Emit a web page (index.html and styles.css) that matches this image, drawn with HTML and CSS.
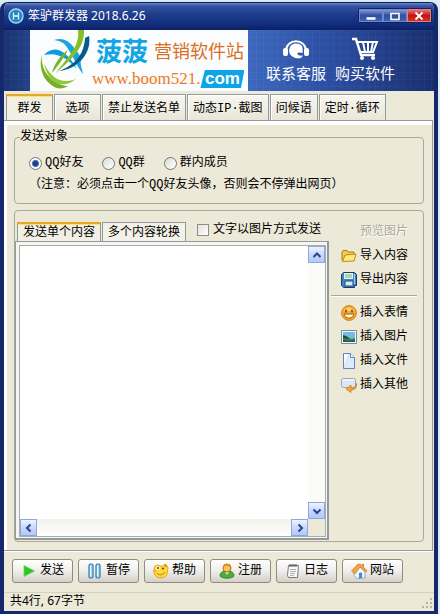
FILE: index.html
```html
<!DOCTYPE html>
<html lang="zh-CN">
<head>
    <meta charset="UTF-8">
    <meta name="viewport" content="width=device-width, initial-scale=1.0">
    <title>笨驴群发器 2018.6.26</title>
    <link rel="stylesheet" href="styles.css">
</head>
<body>
    <div class="window">
        <header class="titlebar">
            <svg class="app-icon" viewBox="0 0 16 16">
                <circle cx="8" cy="8" r="7" fill="#2a86c4" stroke="#a4dcf4" stroke-width="1.4"/>
                <path d="M5.5 4.5v7M10.5 4.5v7M5.5 8h5" stroke="#e2f6ff" stroke-width="1.3" fill="none"/>
            </svg>
            <h1>笨驴群发器 2018.6.26</h1>
            <div class="window-controls">
                <button type="button" aria-label="最小化"><svg viewBox="0 0 12 10"><path d="M1.500 7.500h9" stroke="#fff" stroke-width="2.500"/></svg></button>
                <button type="button" aria-label="最大化"><svg viewBox="0 0 12 10"><path d="M2 2.500h8v6H2z" fill="none" stroke="#fff" stroke-width="1.600"/></svg></button>
                <button type="button" class="close" aria-label="关闭"><svg viewBox="0 0 12 10"><path d="M2.500 1.500l7 7M9.500 1.500l-7 7" stroke="#fff" stroke-width="1.800"/></svg></button>
            </div>
        </header>

        <div class="banner">
            <div class="brand">
                <svg class="brand-mark" viewBox="0 0 58 60">
                    <path d="M12 25C20 16 32 16 45 39C34 27 25 22 12 25z" fill="#0d9bdc"/>
                    <path d="M22 10C37 5 43 20 50 28C47 33 50 38 51 44C44 35 41 26 36 19C33 13 29 11 22 10z" fill="#1ba5e0"/>
                    <path d="M57 6C60 22 47 39 27 41C45 34 52 23 53 8z" fill="#075b88"/>
                    <path d="M10 25C8 40 20 55 36 56C31 59 25 60 18 54C9 47 7 34 10 25z" fill="#78ae28"/>
                    <path d="M12 34C21 50 30 54 44 49C31 60 16 53 12 34z" fill="#8fc93a"/>
                    <path d="M46 0h6C53 19 37 31 24 43C35 27 48 18 46 0z" fill="#86bf25"/>
                    <path d="M36 20C29 25 22 33 20 43C28 33 33 26 36 20z" fill="#78b52a"/>
                </svg>
                <div class="brand-text">
                    <div class="brand-name"><strong>菠菠</strong><span>营销软件站</span></div>
                    <div class="brand-url"><span>www.boom521.</span><b>com</b></div>
                </div>
            </div>
            <nav class="banner-links">
                <a href="#">
                    <svg viewBox="0 0 28 24">
                        <path d="M4 14C4 1 24 1 24 14" fill="none" stroke="#fff" stroke-width="2"/>
                        <rect x="1" y="11" width="5" height="8" rx="2" fill="#fff"/>
                        <rect x="22" y="11" width="5" height="8" rx="2" fill="#fff"/>
                        <path d="M14 6.500C8 6.500 6.500 12 7.500 16C9 20 14 22 19 21L21 18.500C15 19.500 14 15 17 15.500L20.500 16C21.500 10 20 6.500 14 6.500z" fill="#fff"/>
                    </svg>
                    <span>联系客服</span>
                </a>
                <a href="#">
                    <svg viewBox="0 0 28 24">
                        <path d="M1 2h4l5 16h14" fill="none" stroke="#fff" stroke-width="2.500"/>
                        <path d="M7 5h19l-4 10H10M12 5l2 10M17 5v10M22 5l-2 10" fill="none" stroke="#fff" stroke-width="2"/>
                        <circle cx="11" cy="21" r="2" fill="#fff"/><circle cx="22" cy="21" r="2" fill="#fff"/>
                    </svg>
                    <span>购买软件</span>
                </a>
            </nav>
        </div>

        <nav class="tabs">
            <button type="button" class="tab active">群发</button>
            <button type="button" class="tab">选项</button>
            <button type="button" class="tab">禁止发送名单</button>
            <button type="button" class="tab">动态IP·截图</button>
            <button type="button" class="tab">问候语</button>
            <button type="button" class="tab">定时·循环</button>
        </nav>

        <main class="panel">
            <fieldset class="group target">
                <legend>发送对象</legend>
                <div class="radios">
                    <label><input type="radio" name="target" checked>QQ好友</label>
                    <label><input type="radio" name="target">QQ群</label>
                    <label><input type="radio" name="target">群内成员</label>
                </div>
                <p class="note">（注意：必须点击一个QQ好友头像，否则会不停弹出网页）</p>
            </fieldset>

            <section class="group content">
                <div class="editor">
                    <div class="editor-head">
                        <button type="button" class="subtab active">发送单个内容</button>
                        <button type="button" class="subtab">多个内容轮换</button>
                        <label class="as-image"><input type="checkbox">文字以图片方式发送</label>
                    </div>
                    <div class="editor-page">
                        <div class="editor-box">
                            <textarea aria-label="发送内容"></textarea>
                            <div class="scroll-y">
                                <button type="button" aria-label="向上"><svg viewBox="0 0 10 10"><path d="M1.500 7L5 3.500L8.500 7"/></svg></button>
                                <button type="button" aria-label="向下"><svg viewBox="0 0 10 10"><path d="M1.500 3.500L5 7L8.500 3.500"/></svg></button>
                            </div>
                            <div class="scroll-x">
                                <button type="button" aria-label="向左"><svg viewBox="0 0 10 10"><path d="M6.500 1.500L3 5L6.500 8.500"/></svg></button>
                                <button type="button" aria-label="向右"><svg viewBox="0 0 10 10"><path d="M3.500 1.500L7 5L3.500 8.500"/></svg></button>
                            </div>
                            <div class="scroll-corner"></div>
                        </div>
                    </div>
                </div>

                <aside class="actions">
                    <button type="button" class="action preview" disabled>预览图片</button>
                    <button type="button" class="action">
                        <svg viewBox="0 0 16 16"><path d="M1 12.500V4l1-1.500h4l1 1.500h6v3" fill="#f0cf55" stroke="#a87a12"/><path d="M1.500 13.500L4 7l11-1-2 7z" fill="#ffe680" stroke="#b98a18"/></svg>
                        导入内容
                    </button>
                    <button type="button" class="action">
                        <svg viewBox="0 0 16 16"><path d="M2.500.500h11l2 2v11h-2v2h-11l-2-2v-11z" fill="#3f83c8" stroke="#153d6b"/><path d="M3 1h9v6H3z" fill="#e6f4df"/><path d="M4 3h7M4 5h7" stroke="#77b18c"/><path d="M4 9h8v5H4z" fill="#dbe9f6" stroke="#234f80"/><path d="M13.500 2v10" stroke="#9bd3ee"/></svg>
                        导出内容
                    </button>
                    <hr>
                    <button type="button" class="action">
                        <svg viewBox="0 0 16 16"><circle cx="8" cy="8" r="7.400" fill="#f7a934" stroke="#d87d12"/><path d="M2.500 6C4 1.500 12 1.500 13.500 6z" fill="#ffd37c"/><path d="M5 4.500v3M11 4.500v3" stroke="#7b4208" stroke-width="1.500"/><path d="M3 9h10C12 14.500 4 14.500 3 9z" fill="#fff3cd" stroke="#a75a0b"/></svg>
                        插入表情
                    </button>
                    <button type="button" class="action">
                        <svg viewBox="0 0 16 16"><path d="M.500 1.500h15v13H.500z" fill="#f4fafa" stroke="#6d9393"/><path d="M2 3h12v10H2z" fill="#76b9e8"/><path d="M2 7l5 1 3 2 4-1v4H2z" fill="#447f38"/><path d="M2 6l3 1 4 3-7-1z" fill="#1e4d32"/><path d="M2 11l6 1 6-1v2H2z" fill="#244e75"/></svg>
                        插入图片
                    </button>
                    <button type="button" class="action">
                        <svg viewBox="0 0 16 16"><path d="M2.500.500h7l4 4v11h-11z" fill="#dcebfc" stroke="#6484b4"/><path d="M3 1h4L3 11z" fill="#fff"/><path d="M9.500.500v4h4" fill="#fff" stroke="#6484b4"/></svg>
                        插入文件
                    </button>
                    <button type="button" class="action">
                        <svg viewBox="0 0 16 16"><rect x=".5" y="1.500" width="14" height="9" rx="2" fill="#dce7f3" stroke="#96a7bb"/><path d="M2 3h11" stroke="#fff"/><path d="M15.500 6.500C15 10 13 11 10 11v-3l-5 4 5 3.500V13c4 0 6-2 5.500-6.500z" fill="#f5a72e" stroke="#c8761a" stroke-width=".7"/></svg>
                        插入其他
                    </button>
                </aside>
            </section>
        </main>

        <div class="toolbar">
            <button type="button">
                <svg viewBox="0 0 16 16"><path d="M3 2.500L13.500 8L3 13.500z" fill="#2fc71f" stroke="#6bd65c" stroke-width=".8"/></svg>
                发送
            </button>
            <button type="button">
                <svg viewBox="0 0 16 16"><rect x="2" y="1" width="4" height="14" rx="1.500" fill="#a9dbf5" stroke="#2d78ad" stroke-width="1.200"/><rect x="9" y="1" width="4" height="14" rx="1.500" fill="#a9dbf5" stroke="#2d78ad" stroke-width="1.200"/><path d="M3.500 3v10M10.500 3v10" stroke="#ecfaff"/></svg>
                暂停
            </button>
            <button type="button">
                <svg viewBox="0 0 16 16"><path d="M2 3l3-1 2 1h3l2-2 2 2 1 2-1 6c-1 5-10 5-12 1L.500 8z" fill="#ffdc35" stroke="#dc9515" stroke-width=".8"/><path d="M11 1l3 1-1 3z" fill="#ee7324"/><circle cx="5" cy="5" r="2" fill="#fff8cf"/><circle cx="5" cy="5" r="1" fill="#543718"/><circle cx="10" cy="5.500" r="1" fill="#543718"/><path d="M4 10c2 3 6 2 8-1" fill="none" stroke="#c67b13"/><circle cx="2" cy="8" r="1.500" fill="#ffb328"/></svg>
                帮助
            </button>
            <button type="button">
                <svg viewBox="0 0 16 16"><path d="M1 13c0-4 3-5 7-5s7 1 7 5c-2 3-12 3-14 0z" fill="#4cae38" stroke="#277622" stroke-width=".8"/><path d="M5.500 8h5L8 12z" fill="#f7e7bb"/><circle cx="8" cy="5" r="4" fill="#f8c65d" stroke="#ad6b13"/><path d="M4 4c0-4 8-4 8 0L8 3z" fill="#d89325"/></svg>
                注册
            </button>
            <button type="button">
                <svg viewBox="0 0 16 16"><path d="M3.500 2.500h10l-1 12h-9l-1-2z" fill="#fafafa" stroke="#777"/><path d="M5 1v3M7 1v3M9 1v3M11 1v3" stroke="#555"/><path d="M5 6.500h6M5 8.500h6M5 10.500h5M5 12.500h4" stroke="#999" stroke-width=".8"/></svg>
                日志
            </button>
            <button type="button">
                <svg viewBox="0 0 16 16"><path d="M3 7l5-4 6 5v7l-8 .500-3-3z" fill="#eef4fc" stroke="#829bbc" stroke-width=".8"/><path d="M.500 8L7 1l3 .500L16 8l-1.500 1L9 4 4 11z" fill="#f5a33a" stroke="#ca7620" stroke-width=".7"/><path d="M8 10l3-.500V15l-3 .500z" fill="#4c85c5"/><path d="M11 1h2v3l-2-2z" fill="#d9793b"/></svg>
                网站
            </button>
        </div>

        <footer class="statusbar">
            <span>共4行, 67字节</span>
            <svg class="grip" viewBox="0 0 12 12"><path d="M9 1h2v2H9zM5 5h2v2H5zM9 5h2v2H9zM1 9h2v2H1zM5 9h2v2H5zM9 9h2v2H9z" fill="#b8b4a2"/></svg>
        </footer>
    </div>
</body>
</html>
```
FILE: styles.css
```css
:root {
    --face: #ece9d8;
    --navy: #15286c;
    --line: #aca899;
    --ui: "Liberation Mono", "Noto Sans CJK SC", sans-serif;
    --caption: "Noto Sans", "Noto Sans CJK SC", sans-serif;
}

* {
    box-sizing: border-box;
    margin: 0;
    padding: 0;
}

body {
    background: #dcecf4;
    font: 12px/16px var(--ui);
    color: #000;
    padding: 2px 2px 0 0;
}

button, input, textarea {
    font: inherit;
    color: inherit;
}

button {
    white-space: nowrap;
}

svg {
    display: block;
    flex: none;
}

.window {
    display: flex;
    flex-direction: column;
    min-height: calc(100vh - 2px);
    background: var(--face);
    border: 4px solid var(--navy);
    border-top: 1px solid #0b1d5c;
    border-bottom-width: 3px;
    border-radius: 8px 8px 0 0;
    overflow: hidden;
}

/* title bar */
.titlebar {
    display: flex;
    align-items: center;
    gap: 4px;
    height: 27px;
    margin: 0 -4px;
    padding: 0 6px 2px 8px;
    background: linear-gradient(#6b88c8 0, #3553a0 3px, #1d3b8c 12px, #13307f 20px, #0b1f66);
    color: #fff;
}

.titlebar h1 {
    flex: 1;
    font: 12px/16px var(--caption);
}

.app-icon {
    width: 16px;
    height: 16px;
}

.window-controls {
    display: flex;
    border: 1px solid #0d2163;
    border-radius: 2px;
}

.window-controls button {
    display: grid;
    place-items: center;
    width: 24px;
    height: 13px;
    border: 1px solid #6e8acb;
    background: linear-gradient(#7f9ad5, #2f4fa0 50%, #3e62b5);
}

.window-controls svg {
    width: 12px;
    height: 10px;
}

.window-controls .close {
    border-color: #e08080;
    background: linear-gradient(#e47575, #c41313 50%, #d83024);
}

/* banner */
.banner {
    display: flex;
    height: 61px;
    padding-left: 26px;
    background:
        repeating-linear-gradient(90deg, rgba(255,255,255,0.03) 0 1px, transparent 1px 7px),
        repeating-linear-gradient(rgba(255,255,255,0.03) 0 1px, transparent 1px 7px),
        linear-gradient(90deg, #1a3270 0, #24448c 30px, #3d68bd 57%, #2c4fa3 75%, #192f6e);
}

.brand {
    display: flex;
    width: 218px;
    background: #fafcfd;
}

.brand-mark {
    width: 62px;
    height: 60px;
}

.brand-text {
    display: flex;
    flex-direction: column;
    gap: 4px;
    padding-top: 4px;
    white-space: nowrap;
}

.brand-name {
    display: flex;
    align-items: center;
    gap: 6px;
    height: 32px;
    padding-left: 4px;
    font-family: "Noto Sans CJK SC", sans-serif;
}

.brand-name strong {
    font-size: 26px;
    line-height: 32px;
    color: #12a5e4;
}

.brand-name span {
    font-size: 18px;
    line-height: 32px;
    color: #d8701f;
}

.brand-url {
    display: flex;
    align-items: center;
    font: 17px/18px "Liberation Serif", serif;
    color: #ee7a20;
}

.brand-url b {
    width: 44px;
    background: #0ea5e6;
    clip-path: polygon(10% 0, 100% 0, 92% 100%, 0 100%);
    color: #fff;
    font: bold 17px/18px "Liberation Sans", sans-serif;
    text-align: center;
}

.banner-links {
    display: flex;
    gap: 9px;
    padding: 7px 0 0 18px;
}

.banner-links a {
    display: flex;
    flex-direction: column;
    align-items: center;
    gap: 2px;
    color: #fff;
    font: 15px/20px "Noto Sans CJK SC", sans-serif;
    text-decoration: none;
}

.banner-links svg {
    width: 28px;
    height: 24px;
}

/* main tabs */
.tabs {
    display: flex;
    gap: 1px;
    padding: 3px 2px 0;
}

.tab {
    min-width: 47px;
    height: 26px;
    padding: 3px 5px 0;
    border: 1px solid #919b9c;
    border-bottom: 0;
    background: linear-gradient(#f7f6f0, #e9e6d8);
    box-shadow: inset 1px 1px #fff;
}

.tab.active, .subtab.active {
    border-top: 2px solid #e8a824;
    background: #f2f0e4;
    box-shadow: inset 0 1px #ffe07a;
}

.tab.active {
    padding-top: 2px;
}

.panel {
    display: flex;
    flex: 1;
    flex-direction: column;
    gap: 6px;
    margin-right: 1px;
    padding: 8px 4px 8px 6px;
    border: 1px solid #919b9c;
    border-left: 0;
    box-shadow: inset 3px 4px #fff, 0 1px #fff;
}

/* groups */
.group {
    margin: 0 4px;
    border: 1px solid var(--line);
    border-radius: 4px;
}

.target {
    padding: 10px 14px;
}

.target legend {
    margin-left: -9px;
}

.radios {
    display: flex;
    gap: 19px;
}

.radios label, .as-image {
    display: flex;
    align-items: center;
    gap: 3px;
    white-space: nowrap;
}

.radios input {
    appearance: none;
    width: 13px;
    height: 13px;
    border: 1px solid #6f7a80;
    border-radius: 50%;
    background: linear-gradient(135deg, #dcdcd4, #fff);
}

.radios input:checked {
    background: radial-gradient(circle, #1c4090 0 2px, #46699f 3px, #f4f6fa 4px);
}

.note {
    margin-top: 6px;
}

.content {
    display: flex;
    flex: 1;
    padding: 11px 6px 1px 0;
}

.editor {
    display: flex;
    flex: 1;
    flex-direction: column;
    min-width: 0;
}

.editor-head {
    display: flex;
    gap: 1px;
    padding-left: 2px;
}

.subtab {
    height: 19px;
    padding: 2px 5px 0;
    border: 1px solid #919b9c;
    border-bottom: 0;
    background: #f4f2e8;
    line-height: 16px;
}

.subtab.active {
    padding-top: 1px;
}

.as-image {
    gap: 4px;
    height: 16px;
    padding-left: 10px;
}

.as-image input {
    appearance: none;
    width: 12px;
    height: 12px;
    border: 1px solid #8a8f8c;
    background: linear-gradient(135deg, #e2e0d8, #fff);
}

.editor-page {
    display: flex;
    flex: 1;
    padding: 3px 1px 1px 3px;
    border: 1px solid #919b9c;
    border-width: 1px 2px 2px 1px;
    background: #f6f5ee;
}

.editor-box {
    display: grid;
    flex: 1;
    grid-template-columns: 1fr 17px;
    grid-template-rows: 1fr 17px;
    border: 1px solid #a5acb2;
    background: #fff;
}

.editor-box textarea {
    width: 100%;
    height: 100%;
    padding: 2px;
    border: 0;
    outline: 0;
    background: #fff;
    resize: none;
}

.scroll-y, .scroll-x {
    display: flex;
    justify-content: space-between;
    background: #fbfbf8;
}

.scroll-y {
    flex-direction: column;
}

.scroll-x {
    background: linear-gradient(#f2f1ec, #fff);
}

.scroll-corner {
    background: var(--face);
}

.editor-box button {
    display: grid;
    place-items: center;
    width: 17px;
    height: 17px;
    border: 1px solid #8ba7e4;
    background: linear-gradient(#eef3fe, #c9d8fb 50%, #b4c8f8);
}

.editor-box svg {
    width: 10px;
    height: 10px;
    fill: none;
    stroke: #26458f;
    stroke-width: 2;
}

/* side actions */
.actions {
    display: flex;
    flex-direction: column;
    width: 88px;
    margin-top: -2px;
    padding-left: 2px;
}

.action {
    display: flex;
    align-items: center;
    gap: 3px;
    height: 24px;
    padding-left: 10px;
    border: 0;
    background: none;
}

.action svg {
    width: 16px;
    height: 16px;
}

.preview {
    padding-left: 29px;
    color: #aca899;
    text-shadow: 1px 1px #fff;
}

.actions hr {
    margin: 3px 0 4px;
    border: 0;
    border-top: 1px solid var(--line);
    border-bottom: 1px solid #fff;
}

/* bottom bar */
.toolbar {
    display: flex;
    gap: 5px;
    padding: 8px 8px 9px;
}

.toolbar button {
    display: flex;
    align-items: center;
    justify-content: center;
    gap: 3px;
    width: 61px;
    height: 24px;
    border: 1px solid #8f8c80;
    border-radius: 3px;
    background: linear-gradient(#fff, #efeeea 50%, #d4d0c8);
}

.toolbar svg {
    width: 16px;
    height: 16px;
}

.statusbar {
    display: flex;
    align-items: flex-end;
    justify-content: space-between;
    height: 19px;
    padding: 0 1px 2px 6px;
    border-top: 1px solid #d6d2c0;
    font-family: var(--caption);
}

.grip {
    width: 12px;
    height: 12px;
}
```
